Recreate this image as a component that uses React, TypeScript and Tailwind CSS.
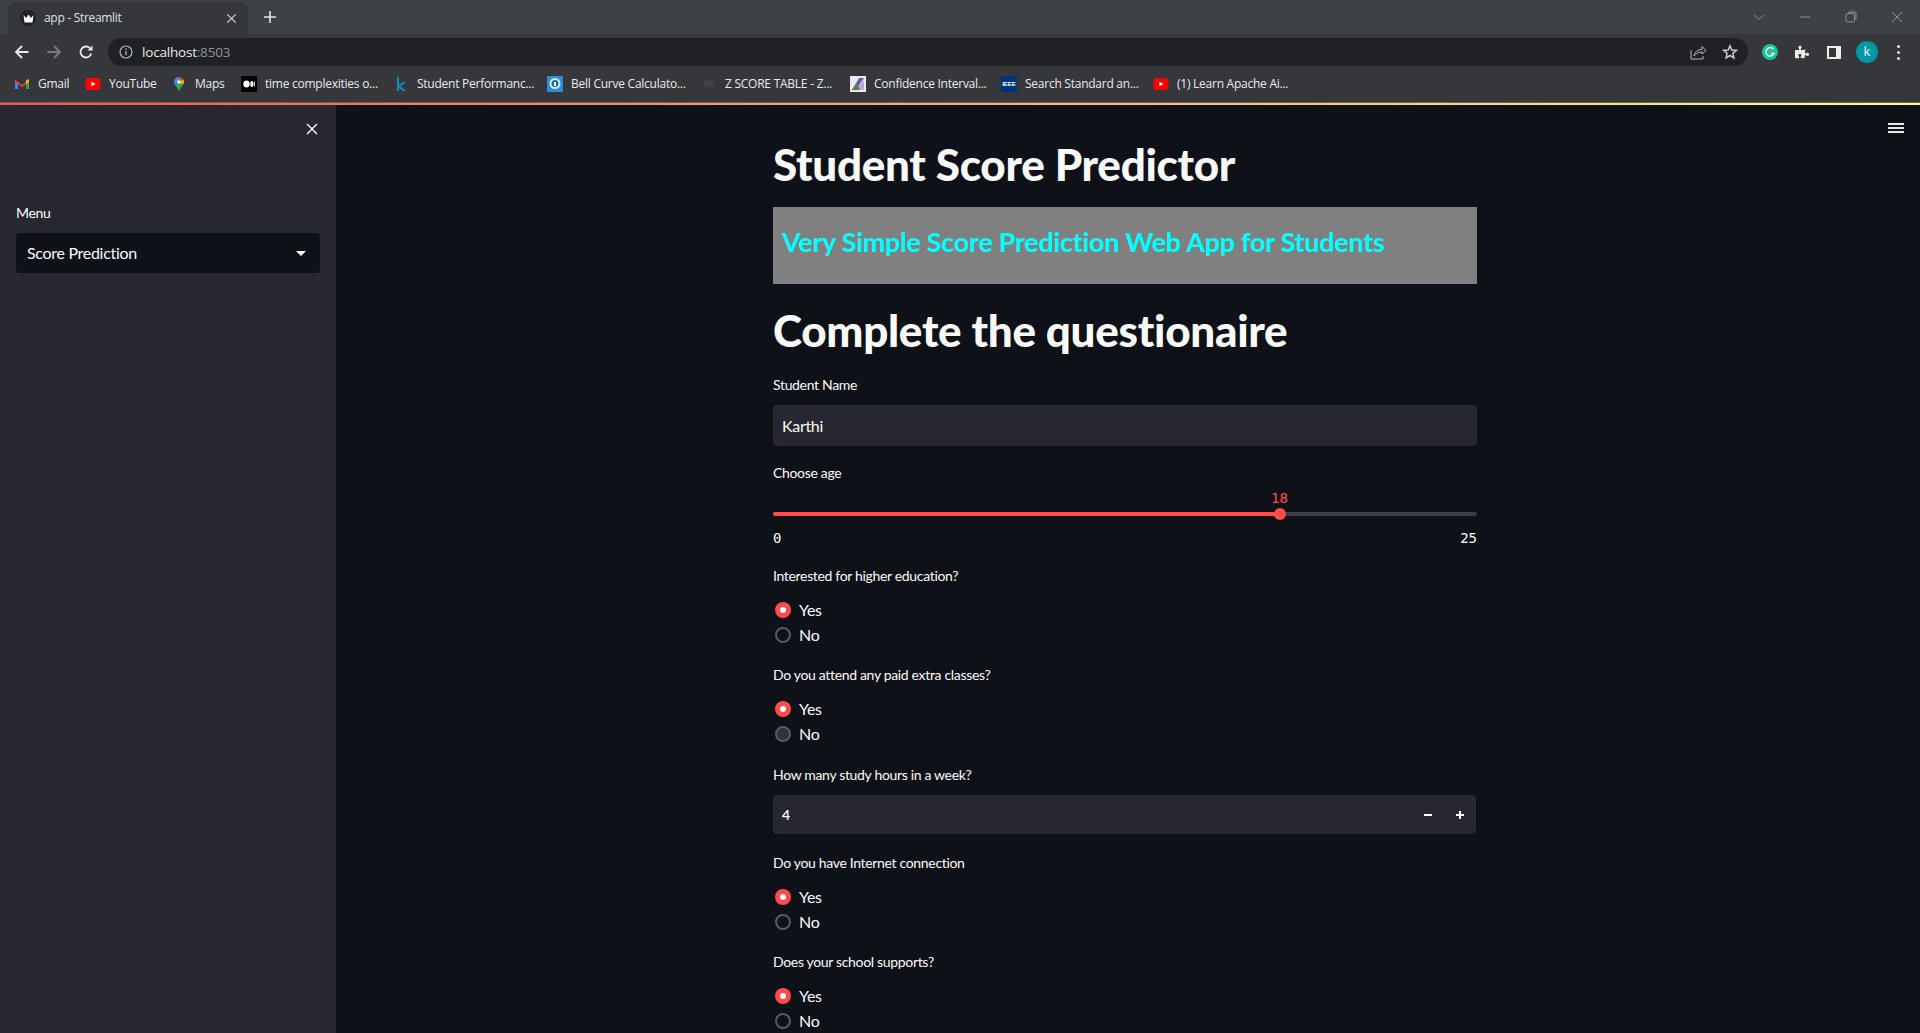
import { FC, ReactNode } from "react"
import { RxCross2 } from "react-icons/rx"
import { FaPuzzlePiece } from "react-icons/fa"

const stSans = "font-['Lato','Noto_Sans',sans-serif]"

const GmailIcon = () => (
	<svg width="16" height="16" viewBox="0 0 16 16">
		<path d="M1 4v9h3V7z" fill="#4285f4" />
		<path d="M15 4v9h-3V7z" fill="#34a853" />
		<path d="M1 3.500 8 9l7-5.500V6L8 11 1 6z" fill="#ea4335" />
		<path d="M12 4.500 15 3v3l-3 2z" fill="#fbbc04" />
	</svg>
)

const YoutubeIcon = () => (
	<svg width="16" height="16" viewBox="0 0 16 16">
		<rect x="0.500" y="2" width="15" height="12" rx="3" fill="#f00" />
		<path d="M6.500 5.700v4.600L10.500 8z" fill="#fff" />
	</svg>
)

const MapsIcon = () => (
	<svg width="16" height="16" viewBox="0 0 16 16">
		<path d="M8 1a5 5 0 0 0-5 5c0 1 .3 1.800.8 2.600L8 6z" fill="#4285f4" />
		<path d="M8 1a5 5 0 0 1 4.400 2.600L8 6z" fill="#ea4335" />
		<path d="M12.400 3.600c.4.800.6 1.500.6 2.400 0 1-.4 1.900-1 2.800L8 6z" fill="#fbbc04" />
		<path d="M3.800 8.600 8 6l4 2.800C10.500 11 8.700 13 8 15.500 7.500 13 5.300 11 3.800 8.600z" fill="#34a853" />
		<circle cx="8" cy="6" r="1.800" fill="#fff" />
	</svg>
)

const MediumIcon = () => (
	<svg width="16" height="16" viewBox="0 0 16 16">
		<rect width="16" height="16" fill="#000" />
		<ellipse cx="5.500" cy="8" rx="3.200" ry="3.400" fill="#fff" />
		<ellipse cx="10.800" cy="8" rx="1.500" ry="3.100" fill="#fff" />
		<ellipse cx="13.300" cy="8" rx="0.600" ry="2.800" fill="#fff" />
	</svg>
)

const KaggleIcon = () => (
	<svg width="16" height="16" viewBox="0 0 16 16">
		<path d="M5 1v14M11.500 6 6 10.500 11.500 15" stroke="#1b87b5" strokeWidth="2.200" fill="none" />
	</svg>
)

const BellIcon = () => (
	<svg width="16" height="16" viewBox="0 0 16 16">
		<rect width="16" height="16" rx="1" fill="#2b8fd6" />
		<circle cx="8" cy="7.500" r="5.500" fill="#d7ecf8" />
		<circle cx="8" cy="7.500" r="3.500" fill="#1f6aa5" />
		<path d="M7 6h2v4H7z" fill="#e4f3fb" />
	</svg>
)

const ToothIcon = () => (
	<svg width="16" height="16" viewBox="0 0 16 16">
		<path d="M3 4c2-2 3 0 5 0s3-2 5 0c1 3-1 5-1.500 9-1.500 0-1-4-3.500-4s-2 4-3.500 4C4 9 2 7 3 4z" fill="#3f4145" />
	</svg>
)

const ConfidenceIcon = () => (
	<svg width="16" height="16" viewBox="0 0 16 16">
		<rect width="16" height="16" fill="#e9e9ef" />
		<path d="M2 14 9 2h5L6 14z" fill="#6f5aa8" />
		<path d="M6 14 14 4v10z" fill="#b9a8d6" />
		<path d="M2 14 7 7l3 7z" fill="#58803f" />
	</svg>
)

const IeeeIcon = () => (
	<div className="w-4 h-4 bg-[#00337a] flex items-center justify-center text-[6px] leading-none font-bold text-white font-['Liberation_Sans',sans-serif]">IEEE</div>
)

type Bookmark = { icon: ReactNode, title: string, textClass: string, itemClass: string }

const bookmarks: Bookmark[] = [
	{ icon: <GmailIcon />, title: "Gmail", textClass: "w-[31px]", itemClass: "ml-[14px]" },
	{ icon: <YoutubeIcon />, title: "YouTube", textClass: "w-[48px]", itemClass: "ml-[16px]" },
	{ icon: <MapsIcon />, title: "Maps", textClass: "w-[32px]", itemClass: "ml-[14px]" },
	{ icon: <MediumIcon />, title: "time complexities o...", textClass: "w-[114px]", itemClass: "ml-[14px]" },
	{ icon: <KaggleIcon />, title: "Student Performanc...", textClass: "w-[116px]", itemClass: "ml-[14px]" },
	{ icon: <BellIcon />, title: "Bell Curve Calculato...", textClass: "w-[116px]", itemClass: "ml-[14px]" },
	{ icon: <ToothIcon />, title: "Z SCORE TABLE - Z...", textClass: "w-[110px]", itemClass: "ml-[14px]" },
	{ icon: <ConfidenceIcon />, title: "Confidence Interval...", textClass: "w-[112px]", itemClass: "ml-[15px]" },
	{ icon: <IeeeIcon />, title: "Search Standard an...", textClass: "w-[113px]", itemClass: "ml-[15px]" },
	{ icon: <YoutubeIcon />, title: "(1) Learn Apache Ai...", textClass: "w-[113px]", itemClass: "ml-[15px]" },
]

const BrowserChrome = () => {
	return (
		<div className="shrink-0 font-['Open_Sans',sans-serif] text-white">
			<div className="h-[34px] bg-[#3e4246] flex items-end pl-[8px]">
				<div className="w-[240px] h-[32px] bg-[#36373b] rounded-t-lg flex items-center pl-[12px]">
					<div className="w-4 h-4 rounded-full bg-[#1f2028] flex items-center justify-center">
						<svg width="11" height="9" viewBox="0 0 11 9">
							<path d="M0.500 1 3 4 5.500 0.500 8 4 10.500 1 9.500 8.500H1.500z" fill="#fff" />
						</svg>
					</div>
					<span className="ml-[8px] w-[176px] text-[12px] tracking-[-0.3px] text-[#dfe1e5]">app - Streamlit</span>
					<RxCross2 size={15} className="ml-[4px] text-[#d5d7da]" />
				</div>
				<svg width="14" height="14" viewBox="0 0 14 14" className="ml-[15px] mb-[10px]">
					<path d="M7 1v12M1 7h12" stroke="#e3e4e6" strokeWidth="1.600" />
				</svg>
				<div className="ml-auto flex items-center h-[28px] mb-[3px] text-[#8e9195]">
					<svg width="14" height="14" viewBox="0 0 14 14">
						<path d="M2 4.500 7 9.500l5-5" stroke="currentColor" fill="none" />
					</svg>
					<svg width="12" height="12" viewBox="0 0 12 12" className="ml-[33px]">
						<path d="M1 6h10" stroke="currentColor" />
					</svg>
					<svg width="12" height="12" viewBox="0 0 12 12" className="ml-[34px]">
						<path d="M3.500 2.500V2a1 1 0 0 1 1-1H10a1 1 0 0 1 1 1v5.500a1 1 0 0 1-1 1h-.5" stroke="currentColor" fill="none" />
						<rect x="1" y="2.500" width="8.500" height="8.500" rx="1.500" stroke="currentColor" fill="none" />
					</svg>
					<svg width="12" height="12" viewBox="0 0 12 12" className="ml-[34px] mr-[17px]">
						<path d="M1 1l10 10M11 1 1 11" stroke="currentColor" />
					</svg>
				</div>
			</div>
			<div className="h-[36px] bg-[#36373b] flex items-center">
				<svg width="16" height="16" viewBox="0 0 16 16" className="ml-[14px] text-[#e8eaed]">
					<path d="M14.500 8h-12M8 2 2 8l6 6" stroke="currentColor" strokeWidth="1.800" fill="none" />
				</svg>
				<svg width="16" height="16" viewBox="0 0 16 16" className="ml-[16px] text-[#7d7f83]">
					<path d="M1.500 8h12M8 2l6 6-6 6" stroke="currentColor" strokeWidth="1.800" fill="none" />
				</svg>
				<svg width="16" height="16" viewBox="0 0 16 16" className="ml-[16px] text-[#e8eaed]">
					<path d="M13.300 9.500A5.500 5.500 0 1 1 12 4.200" stroke="currentColor" strokeWidth="1.800" fill="none" />
					<path d="M14.500 1.500v5h-5z" fill="currentColor" />
				</svg>
				<div className="ml-[14px] w-[1640px] h-[28px] rounded-full bg-[#202124] flex items-center pl-[11px]">
					<svg width="14" height="14" viewBox="0 0 14 14" className="text-[#b5b7ba]">
						<circle cx="7" cy="7" r="6" stroke="currentColor" strokeWidth="1.200" fill="none" />
						<path d="M7 6v4.200M7 3.500v1.400" stroke="currentColor" strokeWidth="1.300" />
					</svg>
					<span className="ml-[9px] text-[13.500px] tracking-[-0.2px] text-[#e8eaed]">localhost<span className="text-[#8f9296]">:8503</span></span>
					<svg width="17" height="16" viewBox="0 0 17 16" className="ml-auto text-[#b5b7ba]">
						<path d="M1 6.500V15h12v-3" stroke="currentColor" fill="none" />
						<path d="M4 12c.5-4 3.500-6.500 8-6.500V2.500L16 6.500l-4 3.500V8C8.500 8 6 9.500 4 12z" stroke="currentColor" fill="none" />
					</svg>
					<svg width="16" height="16" viewBox="0 0 16 16" className="ml-[15px] mr-[10px] text-[#c8cacd]">
						<path d="M8 1.800 9.800 6l4.600.4-3.500 3 1 4.500L8 11.500l-3.900 2.400 1-4.500-3.500-3L6.200 6z" stroke="currentColor" strokeWidth="1.500" fill="none" />
					</svg>
				</div>
				<svg width="16" height="16" viewBox="0 0 16 16" className="ml-[14px]">
					<circle cx="8" cy="8" r="8" fill="#15c39a" />
					<path d="M11.500 5.200A4.200 4.200 0 1 0 12 9.500H9" stroke="#fff" strokeWidth="1.500" fill="none" />
				</svg>
				<FaPuzzlePiece size={14} className="ml-[17px] text-[#eceded]" />
				<div className="ml-[18px] w-[14px] h-[13px] bg-[#eceded] border-2 border-[#eceded] border-r-[5px] flex"><div className="flex-1 bg-[#36373b]" /></div>
				<div className="ml-[15px] w-[22px] h-[22px] rounded-full bg-[#0097a7] flex items-center justify-center text-[13px] text-white">k</div>
				<div className="ml-[19px] flex flex-col gap-[3px]">
					<div className="w-[3px] h-[3px] rounded-full bg-[#e8eaed]" />
					<div className="w-[3px] h-[3px] rounded-full bg-[#e8eaed]" />
					<div className="w-[3px] h-[3px] rounded-full bg-[#e8eaed]" />
				</div>
			</div>
			<div className="h-[32px] bg-[#36373b] flex items-center pb-[4px]">
				{bookmarks.map((b) => (
					<div key={b.title} className={`${b.itemClass} flex items-center gap-[8px]`}>
						{b.icon}
						<span className={`${b.textClass} text-[12px] tracking-[-0.25px] whitespace-nowrap text-[#e8eaed]`}>{b.title}</span>
					</div>
				))}
			</div>
			<div className="h-px bg-[#5f6266]" />
			<div className="h-[2px] bg-gradient-to-r from-[#ff4b4b] to-[#fffd80]" />
		</div>
	)
}

const Label: FC<{ children: ReactNode, className: string }> = ({ children, className }) => (
	<div className={`${className} h-5 text-[14px] leading-5 text-[#fafafa] tracking-[-0.33px]`}>{children}</div>
)

const RadioGroup: FC<{ labelClass: string, label: string, hoverNo?: boolean }> = ({ labelClass, label, hoverNo }) => (
	<div>
		<Label className={labelClass}>{label}</Label>
		<div className="mt-[11px] h-[25px] flex items-center pl-[2px]">
			<div className="w-4 h-4 rounded-full bg-[#ff4b4b] flex items-center justify-center">
				<div className="w-[6px] h-[6px] rounded-full bg-white" />
			</div>
			<span className="ml-[8px] text-[16px] tracking-[-0.3px] text-[#fafafa]">Yes</span>
		</div>
		<div className="h-[25px] flex items-center pl-[2px]">
			<div className={`w-4 h-4 rounded-full border-2 border-[#595a60] ${hoverNo ? "bg-[#31333a]" : "bg-transparent"}`} />
			<span className="ml-[8px] text-[16px] tracking-[-0.3px] text-[#fafafa]">No</span>
		</div>
	</div>
)

const Sidebar = () => {
	return (
		<aside className="w-[336px] shrink-0 bg-[#262730] px-[16px] flex flex-col">
			<div className="mt-[17px] h-[14px] flex justify-end">
				<RxCross2 size={18} className="text-[#fafafa] -mr-[1px] -mt-[2px]" />
			</div>
			<Label className="mt-[67px]">Menu</Label>
			<div className="mt-[10px] h-[40px] rounded bg-[#0e1117] flex items-center justify-between pl-[11px] pr-[14px]">
				<span className="text-[16px] tracking-[-0.3px] text-[#fafafa]">Score Prediction</span>
				<div className="w-0 h-0 border-x-[5px] border-x-transparent border-t-[5px] border-t-white" />
			</div>
		</aside>
	)
}

const Main = () => {
	return (
		<main className="relative flex-1 bg-[#0e1117] pl-[437px] overflow-hidden">
			<div className="absolute top-[18px] right-[16px] w-4 flex flex-col gap-[2px]">
				<div className="h-[2px] bg-[#e6e6e6]" />
				<div className="h-[2px] bg-[#e6e6e6]" />
				<div className="h-[2px] bg-[#e6e6e6]" />
			</div>
			<div className="w-[704px]">
				<h1 className="mt-[35px] h-[48px] text-[44px] leading-[48px] font-black text-[#fafafa] tracking-[-0.3px]">Student Score Predictor</h1>
				<div className="mt-[19px] h-[77px] bg-[#808080] px-[9px] pb-[7px] flex items-center">
					<span className="text-[27px] font-bold text-[#00ffff] tracking-[-0.3px]">Very Simple Score Prediction Web App for Students</span>
				</div>
				<h2 className="mt-[22px] h-[48px] text-[44px] leading-[48px] font-black text-[#fafafa] tracking-[-0.3px]">Complete the questionaire</h2>
				<Label className="mt-[21px]">Student Name</Label>
				<div className="mt-[10px] h-[41px] rounded bg-[#262730] flex items-center px-[9px] text-[16px] tracking-[-0.3px] text-[#fafafa]">Karthi</div>
				<Label className="mt-[17px]">Choose age</Label>
				<div className="mt-[5px] h-5 pl-[498px] font-['DejaVu_Sans_Mono',monospace] text-[14px] leading-5 text-[#ff4b4b]">18</div>
				<div className="mt-[4px] h-1 rounded-full bg-[#3b3d45] flex items-center">
					<div className="w-[507px] h-1 rounded-l-full bg-[#ff4b4b]" />
					<div className="w-3 h-3 rounded-full bg-[#ff4b4b] -ml-[6px]" />
				</div>
				<div className="mt-[12px] h-5 flex justify-between font-['DejaVu_Sans_Mono',monospace] text-[14px] leading-5 text-[#fafafa]">
					<span>0</span>
					<span>25</span>
				</div>
				<RadioGroup labelClass="mt-[18px]" label="Interested for higher education?" />
				<RadioGroup labelClass="mt-[18px]" label="Do you attend any paid extra classes?" hoverNo />
				<Label className="mt-[19px]">How many study hours in a week?</Label>
				<div className="mt-[10px] h-[39px] w-[703px] rounded bg-[#262730] flex items-center pl-[9px] pr-[11px] text-[14px] text-[#fafafa]">
					<span className="font-semibold">4</span>
					<svg width="10" height="10" viewBox="0 0 10 10" className="ml-auto">
						<path d="M1 5h8" stroke="#fafafa" strokeWidth="2" />
					</svg>
					<svg width="10" height="10" viewBox="0 0 10 10" className="ml-[22px]">
						<path d="M1 5h8M5 1v8" stroke="#fafafa" strokeWidth="2" />
					</svg>
				</div>
				<RadioGroup labelClass="mt-[19px]" label="Do you have Internet connection" />
				<RadioGroup labelClass="mt-[18px]" label="Does your school supports?" />
			</div>
		</main>
	)
}

const App = () => {
	return (
		<div className={`h-[1033px] w-[1920px] overflow-hidden flex flex-col ${stSans}`}>
			<BrowserChrome />
			<div className="flex-1 flex min-h-0">
				<Sidebar />
				<Main />
			</div>
		</div>
	)
}

export default App
